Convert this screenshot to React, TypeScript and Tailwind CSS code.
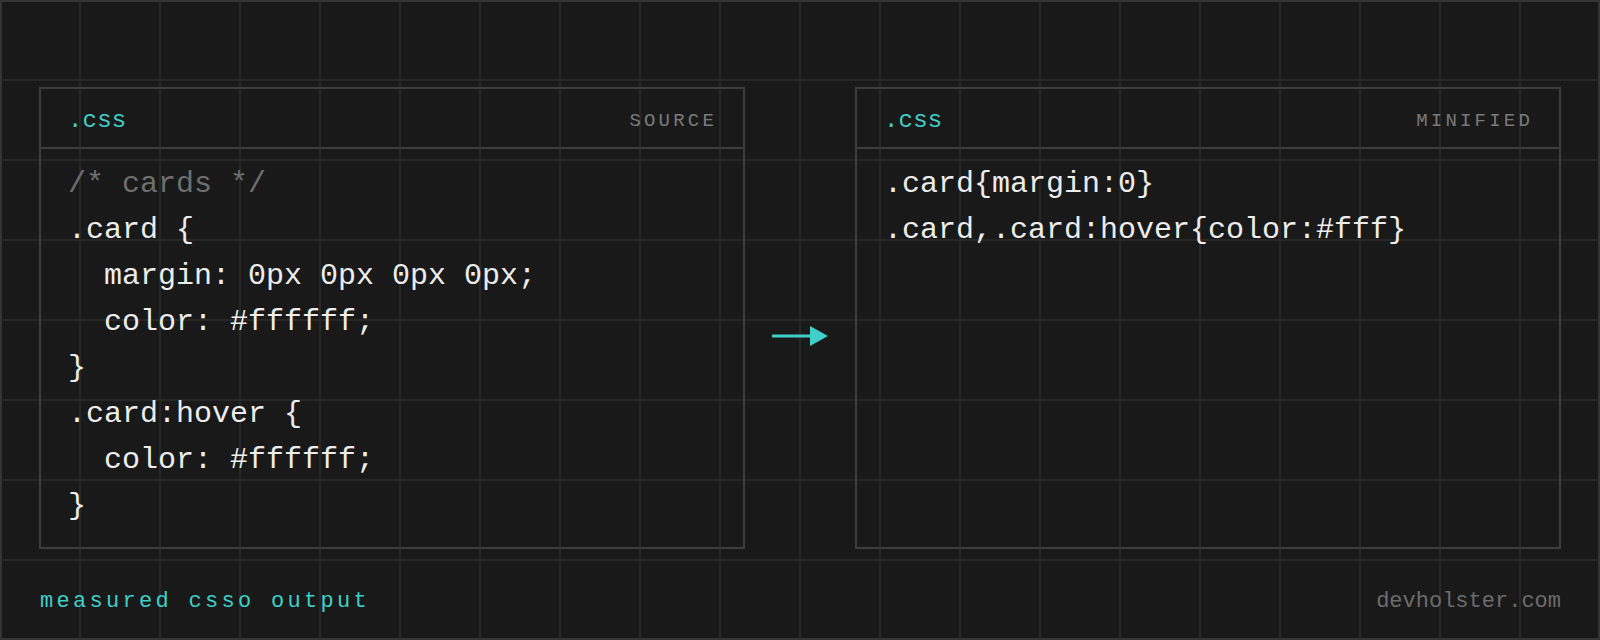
import React from 'react';

const mono = { fontFamily: '"Liberation Mono", "DejaVu Sans Mono", monospace' };

const sourceLines: { text: string; muted?: boolean }[] = [
  { text: '/* cards */', muted: true },
  { text: '.card {' },
  { text: '  margin: 0px 0px 0px 0px;' },
  { text: '  color: #ffffff;' },
  { text: '}' },
  { text: '.card:hover {' },
  { text: '  color: #ffffff;' },
  { text: '}' },
];

const minifiedLines = ['.card{margin:0}', '.card,.card:hover{color:#fff}'];

const Panel: React.FC<{ label: string; children: React.ReactNode }> = ({ label, children }) => (
  <div className="w-[706px] h-[462px] border-2 border-[#3d3d3d] flex flex-col">
    <div className="h-[60px] border-b-2 border-[#3d3d3d] flex items-center justify-between pl-[27px] pr-[26px] pt-[6px]">
      <span className="text-[24px] tracking-[0.2px] text-[#3ecfc8]">.css</span>
      <span className="text-[19px] tracking-[3.2px] text-[#7a7a7a]">{label}</span>
    </div>
    <div className="pt-[12px] px-[27px]">{children}</div>
  </div>
);

const App: React.FC = () => {
  return (
    <div
      className="w-[1600px] h-[640px] border-2 border-[#343434] bg-[#191919] bg-[linear-gradient(to_right,transparent_77px,#272727_77px,#272727_79px,transparent_79px),linear-gradient(to_bottom,transparent_77px,#272727_77px,#272727_79px,transparent_79px)] bg-[size:80px_80px] flex flex-col px-[37px] pt-[85px] overflow-hidden"
      style={mono}
    >
      <div className="flex">
        <Panel label="SOURCE">
          {sourceLines.map((line, i) => (
            <div
              key={i}
              className={`whitespace-pre text-[30px] leading-[46px] ${line.muted ? 'text-[#6e6e6e]' : 'text-[#ededed]'}`}
            >
              {line.text}
            </div>
          ))}
        </Panel>

        <div className="flex-1 flex items-center justify-center pt-[36px]">
          <svg width="56" height="20" viewBox="0 0 56 20">
            <rect x="0" y="8.5" width="40" height="3" fill="#3ecfc8" />
            <polygon points="38,0 56,10 38,20" fill="#3ecfc8" />
          </svg>
        </div>

        <Panel label="MINIFIED">
          {minifiedLines.map((line, i) => (
            <div key={i} className="whitespace-pre text-[30px] leading-[46px] text-[#ededed]">
              {line}
            </div>
          ))}
        </Panel>
      </div>

      <div className="flex items-center justify-between mt-[37px] h-[30px] pl-[1px]">
        <span className="text-[22px] tracking-[3.3px] text-[#3ecfc8]">measured csso output</span>
        <span className="text-[22px] text-[#6c6c6c]">devholster.com</span>
      </div>
    </div>
  );
};

export default App;
